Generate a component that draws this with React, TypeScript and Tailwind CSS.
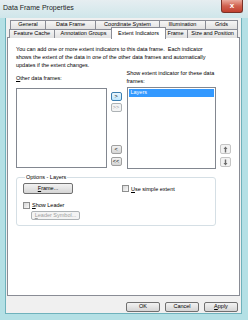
import React from "react";

const ui = "font-['Liberation_Sans',Arial,sans-serif]";

function Btn({
  children,
  className = "",
  variant = "normal",
}: {
  children: React.ReactNode;
  className?: string;
  variant?: "normal" | "default" | "disabled";
}) {
  const look =
    variant === "default"
      ? "border-[#3c7fb1] bg-linear-to-b from-[#eaf6fd] to-[#bee6fd] text-black"
      : variant === "disabled"
      ? "border-[#adb2b5] bg-[#f4f4f4] text-[#a0a0a0]"
      : "border-[#707070] bg-linear-to-b from-[#f2f2f2] to-[#d5d5d5] text-black";
  return (
    <div
      className={`flex items-center justify-center rounded-[2px] border text-[5.5px] leading-none ${look} ${className}`}
    >
      {children}
    </div>
  );
}

function Check({ label }: { label: React.ReactNode }) {
  return (
    <div className="flex items-center gap-[2px]">
      <div className="h-[7px] w-[7px] border border-[#8e8f8f] bg-linear-to-br from-[#d6d6d6] to-[#fafafa]" />
      <span className="text-[5.5px] leading-[8px]">{label}</span>
    </div>
  );
}

function Tab({ label, w, active = false }: { label: string; w: number; active?: boolean }) {
  if (active)
    return (
      <div
        className="relative z-10 -mx-[2px] -mt-[2px] mb-[-1px] flex h-[12px] items-start justify-center border border-b-0 border-[#898c95] bg-white pt-[2px] text-[5.5px] leading-[7px]"
        style={{ width: w + 4 }}
      >
        {label}
      </div>
    );
  return (
    <div
      className="-ml-[1px] flex h-[9px] items-center justify-center border border-b-0 border-[#898c95] bg-linear-to-b from-[#f5f5f5] to-[#e1e1e1] text-[5.5px] leading-none first:ml-0"
      style={{ width: w + 1 }}
    >
      {label}
    </div>
  );
}

function Arrow({ up }: { up?: boolean }) {
  return (
    <svg width="5" height="7" viewBox="0 0 5 7" className={up ? "" : "rotate-180"}>
      <path d="M2.5 0.5 L4.5 3 H3.2 V6.5 H1.8 V3 H0.5 Z" fill="#6b6b6b" />
    </svg>
  );
}

export default function App() {
  return (
    <div className={`${ui} flex h-[320px] w-[248px] flex-col overflow-hidden bg-[#b4e0e5] text-black`}>
      {/* title bar */}
      <div className="flex h-[18px] shrink-0 items-start justify-between bg-linear-to-b from-[#e6eef1] to-[#cfe6ea]">
        <span className="pl-[3px] pt-[4px] text-[7px] leading-[8px] text-[#1e1e1e]">Data Frame Properties</span>
        <div className="mr-[5px] flex h-[13px] w-[22px] items-center justify-center rounded-b-[3px] border border-t-0 border-[#7a3228] bg-linear-to-b from-[#e9a99c] via-[#d0614f] to-[#c2402f]">
          <span className="text-[8px] font-bold leading-none text-white">x</span>
        </div>
      </div>

      {/* client area */}
      <div className="ml-[5px] flex h-[296px] w-[237px] flex-col border-x border-b border-[#6fb2bc] bg-[#f0f0f0]">
        <div className="ml-[1px] w-[233px] pt-[2px]">
          {/* back row */}
          <div className="ml-[3px] flex">
            <Tab label="General" w={35} />
            <Tab label="Data Frame" w={50} />
            <Tab label="Coordinate System" w={64} />
            <Tab label="Illumination" w={46} />
            <Tab label="Grids" w={32} />
          </div>
          {/* front row */}
          <div className="ml-[2px] flex h-[8px] items-start">
            <Tab label="Feature Cache" w={45} />
            <Tab label="Annotation Groups" w={58} />
            <Tab label="Extent Indicators" w={51} active />
            <Tab label="Frame" w={24} />
            <Tab label="Size and Position" w={50} />
          </div>

          {/* tab page */}
          <div className="flex h-[259px] flex-col border border-[#898c95] bg-white px-[8px] pt-[7px]">
            <p className="whitespace-nowrap text-[5.5px] leading-[8px]">
              You can add one or more extent indicators to this data frame.&nbsp; Each indicator
              <br />
              shows the extent of the data in one of the other data frames and automatically
              <br />
              updates if the extent changes.
            </p>

            <div className="flex items-start">
              <div className="flex w-[91px] flex-col">
                <span className="mt-[5px] text-[5.5px] leading-[8px]">
                  <u>O</u>ther data frames:
                </span>
                <div className="mt-[6px] h-[80px] border border-[#828790] bg-white" />
              </div>

              <div className="ml-[4px] flex w-[11px] flex-col">
                <Btn variant="default" className="mt-[23px] h-[9px]">&gt;</Btn>
                <Btn variant="disabled" className="mt-[2px] h-[9px]">&gt;&gt;</Btn>
                <Btn className="mt-[33px] h-[9px] border-[#a0a0a0]">&lt;</Btn>
                <Btn className="mt-[3px] h-[9px] border-[#a0a0a0]">&lt;&lt;</Btn>
              </div>

              <div className="ml-[5px] flex w-[90px] flex-col">
                <span className="text-[5.5px] leading-[8px]">
                  Show extent indicator for these data
                  <br />
                  frames:
                </span>
                <div className="mt-[2px] h-[82px] border border-[#828790] bg-white p-[1px]">
                  <div className="flex h-[8px] items-center bg-[#3399ff] pl-[2px] text-[5.5px] leading-none text-white">
                    Layers
                  </div>
                </div>
              </div>

              <div className="ml-[4px] flex w-[11px] flex-col">
                <div className="mt-[75px] flex h-[10px] items-center justify-center rounded-[2px] border border-[#c5c5c5] bg-[#f2f2f2]">
                  <Arrow up />
                </div>
                <div className="mt-[3px] flex h-[10px] items-center justify-center rounded-[2px] border border-[#c5c5c5] bg-[#f2f2f2]">
                  <Arrow />
                </div>
              </div>
            </div>

            <fieldset className="mt-[4px] w-[200px] rounded-[3px] border border-[#d5dfe5] px-[6px] pb-[5px] pt-[2px]">
              <legend className="ml-[2px] px-[1px] text-[5.5px] leading-[8px]">Options - Layers</legend>
              <div className="flex items-center">
                <Btn className="h-[11px] w-[50px]">
                  <span>
                    <u>F</u>rame...
                  </span>
                </Btn>
                <div className="ml-[49px]">
                  <Check
                    label={
                      <>
                        <u>U</u>se simple extent
                      </>
                    }
                  />
                </div>
              </div>
              <div className="mt-[7px]">
                <Check
                  label={
                    <>
                      <u>S</u>how Leader
                    </>
                  }
                />
              </div>
              <Btn variant="disabled" className="ml-[8px] mt-[2px] h-[9px] w-[49px]">
                <span>
                  <u>L</u>eader Symbol...
                </span>
              </Btn>
            </fieldset>
          </div>

          {/* dialog buttons */}
          <div className="mt-[6px] flex justify-end gap-[5px] pr-[2px]">
            <Btn className="h-[10px] w-[34px]">OK</Btn>
            <Btn className="h-[10px] w-[34px]">Cancel</Btn>
            <Btn className="h-[10px] w-[34px]">
              <span>
                <u>A</u>pply
              </span>
            </Btn>
          </div>
        </div>
      </div>
    </div>
  );
}
